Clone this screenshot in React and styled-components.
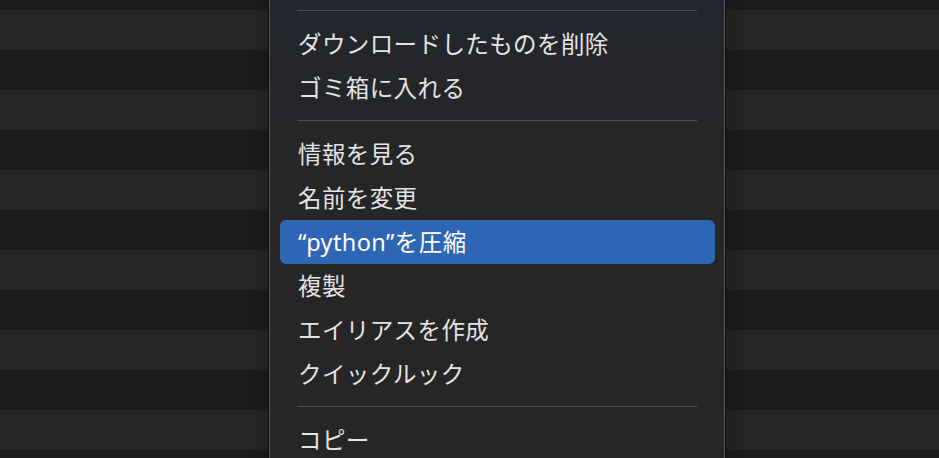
import React from "react";
import styled, { createGlobalStyle } from "styled-components";

const Global = createGlobalStyle`
  html, body { margin: 0; padding: 0; background: #1d1d1d; }
  body { width: 939px; height: 458px; overflow: hidden; }
  #root { width: 939px; height: 458px; }
`;

const Page = styled.div`
  position: relative;
  width: 939px;
  height: 458px;
  overflow: hidden;
  background: #1d1d1d;
  display: flex;
  flex-direction: column;
  padding-top: 10px;
  box-sizing: border-box;
`;

const Stripe = styled.div`
  flex: 0 0 40px;
  height: 40px;
  background: ${(p) => (p.$alt ? "#1d1d1d" : "#272727")};
`;

const Menu = styled.div`
  position: absolute;
  left: 269px;
  top: -12px;
  width: 456px;
  height: 500px;
  box-sizing: border-box;
  border: 1px solid #5b5b5d;
  box-shadow: 0 0 0 1px #0b0b0b, 0 0 30px rgba(0, 0, 0, 0.35);
  border-radius: 10px;
  background: linear-gradient(180deg, #22252e 0px, #24262a 90px, #262626 200px, #262626 100%);
  padding: 11px 9px 0 10px;
  display: flex;
  flex-direction: column;
  font-family: "Noto Sans", "Noto Sans CJK JP", sans-serif;
`;

const Separator = styled.div`
  height: 22px;
  flex: 0 0 22px;
  display: flex;
  align-items: flex-start;
  padding: 10px 18px 0 17px;
  box-sizing: border-box;
  &::after {
    content: "";
    display: block;
    width: 100%;
    height: 1px;
    background: #4e4e50;
  }
`;

const Item = styled.div`
  height: 44px;
  flex: 0 0 44px;
  line-height: 44px;
  padding-left: 18px;
  border-radius: 6px;
  font-size: 23.5px;
  color: ${(p) => (p.$active ? "#ffffff" : "#e4e4e4")};
  background: ${(p) => (p.$active ? "#2f65b5" : "transparent")};
  white-space: nowrap;
  letter-spacing: 0.4px;
`;

const sections = [
  ["ダウンロードしたものを削除", "ゴミ箱に入れる"],
  ["情報を見る", "名前を変更", "“python”を圧縮", "複製", "エイリアスを作成", "クイックルック"],
  ["コピー"],
];

export default function App() {
  return (
    <>
      <Global />
      <Page>
        {Array.from({ length: 12 }).map((_, i) => (
          <Stripe key={i} $alt={i % 2 === 1} />
        ))}
        <Menu>
          {sections.map((items, si) => (
            <React.Fragment key={si}>
              <Separator />
              {items.map((t) => (
                <Item key={t} $active={t.includes("python")}>
                  {t}
                </Item>
              ))}
            </React.Fragment>
          ))}
        </Menu>
      </Page>
    </>
  );
}
